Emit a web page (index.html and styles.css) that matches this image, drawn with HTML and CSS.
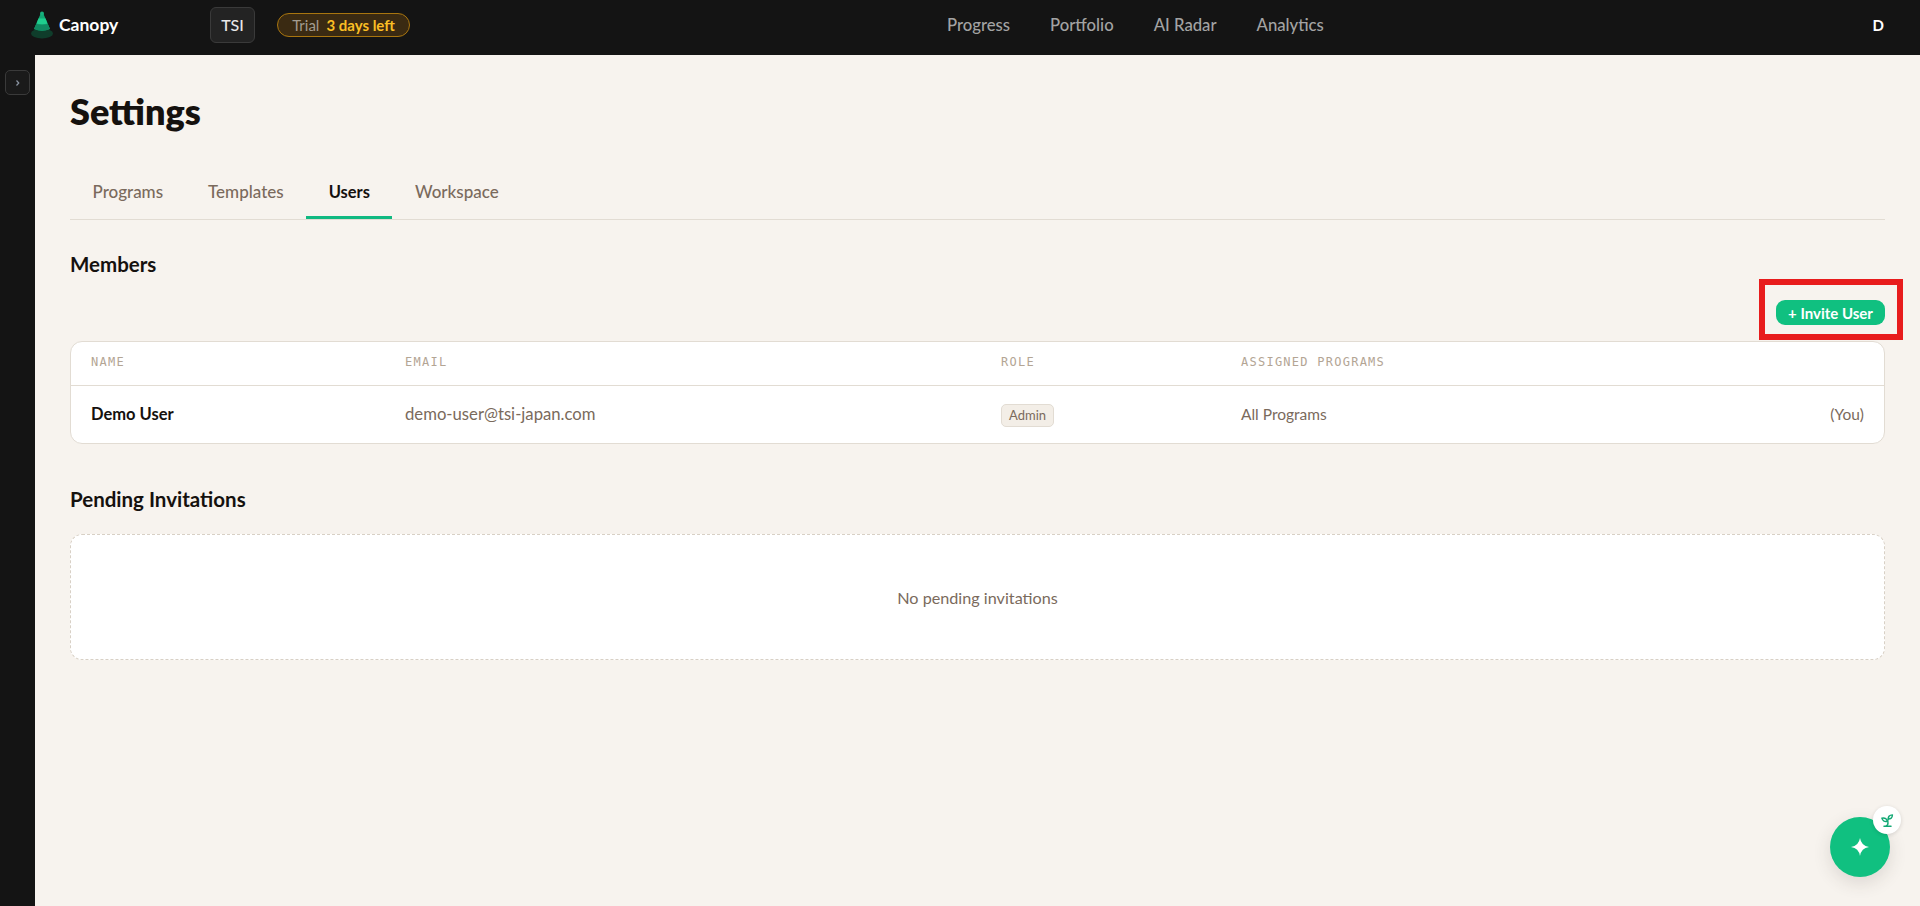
FILE: index.html
```html
<!DOCTYPE html>
<html lang="en">
<head>
    <meta charset="UTF-8">
    <title>Settings - Canopy</title>
    <link rel="stylesheet" href="styles.css">
</head>
<body>
    <header class="topbar">
        <div class="brand">
            <svg class="brand-logo" width="24" height="30" viewBox="0 0 24 30">
                <ellipse cx="12" cy="23.500" rx="11" ry="5" fill="#0f3d2b"/>
                <path d="M10.500 4h3l6.500 15q-8 3.500-16 0z" fill="#12a874"/>
                <path d="M8.500 8.500h7l2 5q-5.500 1.500-11 0z" fill="#1fce8e"/>
                <path d="M4 19l2.200-5q5.800 1.500 11.600 0l2.200 5q-8 3.500-16 0z" fill="#118a62"/>
                <circle cx="12" cy="3.500" r="2" fill="#17b07d"/>
            </svg>
            <span class="brand-name">Canopy</span>
        </div>
        <div class="org">TSI</div>
        <div class="trial">
            <span class="trial-label">Trial</span>
            <strong class="trial-days">3 days left</strong>
        </div>
        <nav class="mainnav">
            <a>Progress</a>
            <a>Portfolio</a>
            <a>AI Radar</a>
            <a>Analytics</a>
        </nav>
        <div class="avatar">D</div>
    </header>

    <div class="layout">
        <aside class="sidebar">
            <button class="sidebar-toggle">
                <svg width="6" height="8" viewBox="0 0 6 8"><path d="M1.500 1.500l2.300 2.500-2.300 2.500" fill="none" stroke="#8b95a3" stroke-width="1.200"/></svg>
            </button>
        </aside>

        <main class="content">
            <h1>Settings</h1>

            <div class="tabs">
                <a class="tab">Programs</a>
                <a class="tab">Templates</a>
                <a class="tab active">Users</a>
                <a class="tab">Workspace</a>
            </div>

            <h2 class="section-title">Members</h2>

            <div class="toolbar">
                <div class="highlight">
                    <button class="invite-btn">+ Invite User</button>
                </div>
            </div>

            <div class="card">
                <div class="row head">
                    <div>NAME</div>
                    <div>EMAIL</div>
                    <div>ROLE</div>
                    <div>ASSIGNED PROGRAMS</div>
                    <div></div>
                </div>
                <div class="row body">
                    <div class="user-name">Demo User</div>
                    <div class="email">demo-user@tsi-japan.com</div>
                    <div><span class="role-badge">Admin</span></div>
                    <div class="assigned">All Programs</div>
                    <div class="you">(You)</div>
                </div>
            </div>

            <h2 class="section-title pending-title">Pending Invitations</h2>

            <div class="empty">No pending invitations</div>
        </main>
    </div>

    <div class="fab">
        <svg width="20" height="20" viewBox="0 0 20 20"><path d="M10 1q1.200 7.800 9 9-7.800 1.200-9 9-1.200-7.800-9-9 7.800-1.200 9-9z" fill="#fff"/></svg>
        <div class="fab-badge">
            <svg width="17" height="17" viewBox="0 0 24 24" fill="none" stroke="#12a874" stroke-width="2" stroke-linecap="round" stroke-linejoin="round">
                <path d="M7 20h10"/>
                <path d="M10 20c5.500-2.500.8-6.400 3-10"/>
                <path d="M9.500 9.400c1.100.8 1.800 2.200 2.300 3.700-2 .4-3.500.4-4.800-.3-1.200-.6-2.300-1.900-3-4.200 2.800-.5 4.400 0 5.500.8z"/>
                <path d="M14.100 6a7 7 0 0 0-1.100 4c1.900-.1 3.300-.6 4.300-1.400 1-1 1.600-2.300 1.700-4.600-2.700.1-4 1-4.900 2z"/>
            </svg>
        </div>
    </div>
</body>
</html>
```

FILE: styles.css
```css
* {
    box-sizing: border-box;
}

html, body {
    height: 100%;
}

body {
    margin: 0;
    overflow: hidden;
    background: #f7f3ee;
    color: #15110e;
    font-family: Lato, "Noto Sans", Arial, sans-serif;
}

/* top bar */
.topbar {
    display: flex;
    align-items: center;
    height: 55px;
    padding: 0 36px 6px 30px;
    background: #141414;
}

.brand {
    display: flex;
    align-items: center;
    width: 180px;
}

.brand-logo {
    margin-right: 5px;
}

.brand-name {
    color: #fff;
    font-size: 17.500px;
    font-weight: 700;
}

.org {
    display: flex;
    align-items: center;
    justify-content: center;
    width: 45px;
    height: 36px;
    background: #232323;
    border: 1px solid #3a3a3a;
    border-radius: 6px;
    color: #e8e8e8;
    font-size: 16px;
    font-weight: 500;
}

.trial {
    display: flex;
    align-items: center;
    justify-content: center;
    gap: 7px;
    width: 133px;
    height: 24px;
    margin-left: 22px;
    background: #3a2a12;
    border: 1px solid #a8750f;
    border-radius: 12px;
    font-size: 15px;
}

.trial-label {
    color: #a39c90;
}

.trial-days {
    color: #fbbf24;
    font-weight: 700;
}

.mainnav {
    display: flex;
    gap: 40px;
    margin-left: 537px;
}

.mainnav a {
    color: #a3a3a3;
    font-size: 16.700px;
    font-weight: 500;
}

.avatar {
    margin-left: auto;
    color: #fff;
    font-size: 15px;
    font-weight: 700;
}

/* page */
.layout {
    display: flex;
    height: calc(100% - 55px);
}

.sidebar {
    flex: none;
    width: 35px;
    padding: 15px 0 0 5px;
    background: #141414;
}

.sidebar-toggle {
    display: flex;
    align-items: center;
    justify-content: center;
    width: 25px;
    height: 25px;
    padding: 0;
    background: #1a1a1a;
    border: 1px solid #3a3a3a;
    border-radius: 5px;
}

.content {
    flex: 1;
    padding: 34px 35px 0;
}

h1 {
    margin: 0;
    font-size: 36px;
    line-height: 44px;
    font-weight: 800;
}

.tabs {
    display: flex;
    margin-top: 41px;
    border-bottom: 1px solid #e2dcd3;
}

.tab {
    height: 45px;
    padding: 8px 22.500px 0;
    color: #7a6a5c;
    font-size: 17px;
    font-weight: 500;
    line-height: 20px;
}

.tab.active {
    color: #15110e;
    font-size: 16.500px;
    font-weight: 700;
    border-bottom: 3px solid #10b981;
    margin-bottom: -1px;
}

.section-title {
    margin: 0;
    font-size: 20.500px;
    font-weight: 700;
    line-height: 24px;
}

.tabs + .section-title {
    margin-top: 32px;
}

.toolbar {
    display: flex;
    justify-content: flex-end;
    height: 65px;
}

/* red box drawn over the screenshot around the button */
.highlight {
    position: relative;
    height: 25px;
    margin-top: 24px;
}

.highlight::before {
    content: "";
    position: absolute;
    top: -21px;
    left: -17px;
    right: -18px;
    bottom: -15px;
    border: 6px solid #e81c1c;
}

.invite-btn {
    position: relative;
    display: block;
    width: 109px;
    height: 25px;
    padding: 0;
    background: #10c080;
    border: none;
    border-radius: 9px;
    color: #fff;
    font-family: inherit;
    font-size: 15px;
    font-weight: 700;
}

.card {
    background: #fff;
    border: 1px solid #e2dcd3;
    border-radius: 12px;
}

.row {
    display: grid;
    grid-template-columns: 314px 596px 240px 1fr auto;
    padding: 0 20px;
}

.row.head {
    align-items: center;
    height: 44px;
    padding-bottom: 3px;
    border-bottom: 1px solid #e2dcd3;
    color: #b3a594;
    font-family: "DejaVu Sans Mono", "Liberation Mono", monospace;
    font-size: 12px;
    letter-spacing: 1.250px;
}

.row.body {
    align-items: center;
    height: 57px;
    padding-bottom: 2px;
    color: #7a6a5c;
    font-size: 16px;
}

.user-name {
    color: #15110e;
    font-size: 16.500px;
    font-weight: 700;
}

.email {
    font-size: 16.700px;
}

.assigned, .you {
    font-size: 15.500px;
}

.role-badge {
    display: inline-block;
    margin-top: 3px;
    padding: 3px 7px;
    background: #f3eee7;
    border: 1px solid #e2dcd3;
    border-radius: 5px;
    font-size: 13px;
    line-height: 15px;
}

.pending-title {
    margin-top: 43px;
}

.empty {
    display: flex;
    align-items: center;
    justify-content: center;
    height: 126px;
    margin-top: 23px;
    background: #fff;
    border: 1px dashed #d8d0c5;
    border-radius: 12px;
    color: #7a6a5c;
    font-size: 16.200px;
}

/* floating assistant button */
.fab {
    position: fixed;
    left: 1830px;
    top: 817px;
    display: flex;
    align-items: center;
    justify-content: center;
    width: 60px;
    height: 60px;
    background: #10c080;
    border-radius: 50%;
    box-shadow: 0 6px 18px rgba(60, 50, 40, 0.14);
}

.fab-badge {
    position: absolute;
    top: -11px;
    right: -11px;
    display: flex;
    align-items: center;
    justify-content: center;
    width: 28px;
    height: 28px;
    background: #fff;
    border-radius: 50%;
    box-shadow: 0 1px 4px rgba(0, 0, 0, 0.14);
}
```
